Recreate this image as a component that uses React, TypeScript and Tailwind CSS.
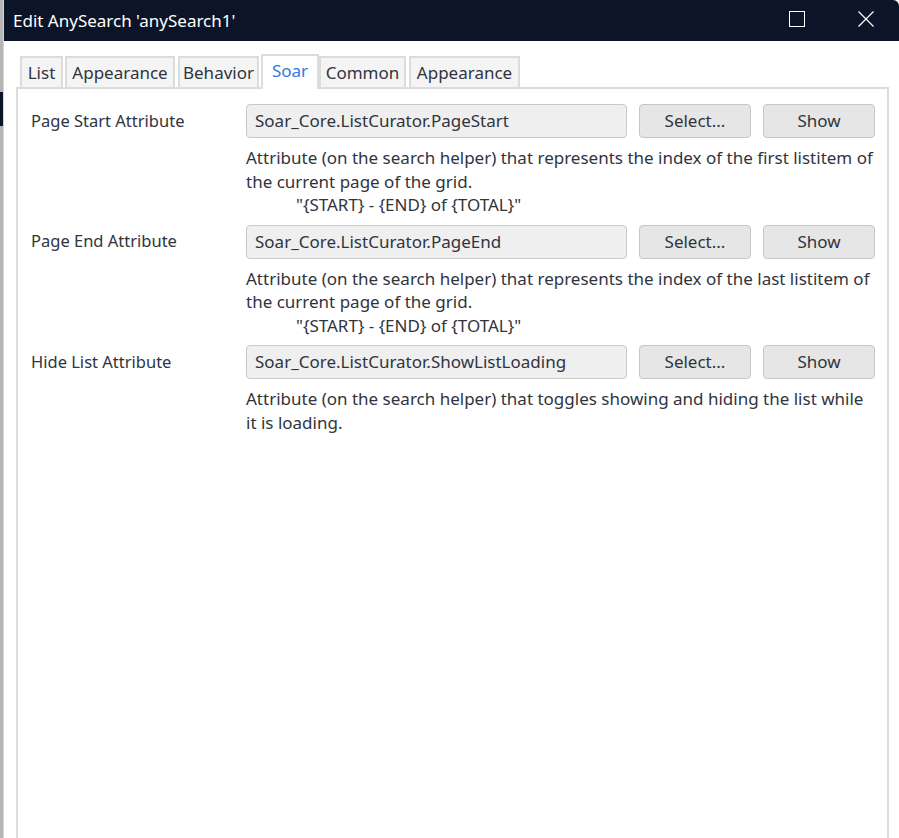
import React from "react";

const font = { fontFamily: '"Noto Sans", "Open Sans", sans-serif' };

function Row({
  label,
  value,
  lines,
}: {
  label: string;
  value: string;
  lines: React.ReactNode[];
}) {
  return (
    <div className="flex flex-col">
      <div className="flex items-center h-[34px]">
        <div className="w-[215px] text-[16.5px] text-[#30343d]">{label}</div>
        <div className="w-[381px] h-[34px] bg-[#efefef] border border-[#c9c9c9] rounded-[4px] flex items-center pl-[8px] text-[17px] text-[#30343d]">
          {value}
        </div>
        <button className="ml-[12px] w-[112px] h-[34px] bg-[#e6e6e6] border border-[#c6c6c6] rounded-[4px] text-[17px] text-[#30343d]">
          Select...
        </button>
        <button className="ml-[12px] w-[112px] h-[34px] bg-[#e6e6e6] border border-[#c6c6c6] rounded-[4px] text-[17px] text-[#30343d]">
          Show
        </button>
      </div>
      <div className="ml-[215px] mt-[8px] text-[17px] leading-[23.5px] text-[#30343d]">
        {lines.map((l, i) => (
          <div key={i}>{l}</div>
        ))}
      </div>
    </div>
  );
}

export default function App() {
  const tabs: { t: string; cls: string }[] = [
    { t: "List", cls: "w-[43px] ml-[0px]" },
    { t: "Appearance", cls: "w-[110px] ml-[2px]" },
    { t: "Behavior", cls: "w-[81px] ml-[3px]" },
    { t: "Soar", cls: "w-[58px] ml-[2px]" },
    { t: "Common", cls: "w-[87px] ml-[0px]" },
    { t: "Appearance", cls: "w-[111px] ml-[3px]" },
  ];
  return (
    <div className="w-[899px] h-[838px] overflow-hidden bg-white flex" style={font}>
      <div className="w-[3px] h-full bg-[#b5b5b5] flex flex-col">
        <div className="h-[92px]" />
        <div className="h-[34px] bg-[#0c1528]" />
      </div>
      <div className="w-[1px] h-full bg-[#d6d6d6]" />
      <div className="flex-1 flex flex-col">
        <div className="h-[41px] bg-[#0c1528] flex items-center text-white text-[17px] pl-[9px] rounded-tr-[6px]">
          <span>Edit AnySearch 'anySearch1'</span>
          <div className="ml-auto flex items-center -mt-[3px]">
            <svg width="16" height="16" viewBox="0 0 16 16" className="mr-[53px]">
              <rect x="0.5" y="0.5" width="15" height="15" fill="none" stroke="white" strokeWidth="1" />
            </svg>
            <svg width="16" height="16" viewBox="0 0 16 16" className="mr-[25px]">
              <path d="M0.5 0.5 L15.5 15.5 M15.5 0.5 L0.5 15.5" stroke="white" strokeWidth="1.2" />
            </svg>
          </div>
        </div>
        <div className="pl-[12px] pt-[13px] flex flex-col flex-1">
          <div className="flex items-end h-[33px] pl-[4px]">
            {tabs.map(({ t, cls }, i) =>
              t === "Soar" ? (
                <div
                  key={i}
                  className={`${cls} h-[35px] bg-white border-2 border-b-0 border-[#dcdcdc] flex justify-center items-center text-[17px] text-[#2d7be5] -mb-[2px] relative z-10 pb-[4px]`}
                >
                  {t}
                </div>
              ) : (
                <div
                  key={i}
                  className={`${cls} h-[31px] bg-[#f4f4f4] border-2 border-b-0 border-[#dcdcdc] flex justify-center items-center text-[17px] text-[#30343d]`}
                >
                  {t}
                </div>
              )
            )}
          </div>
          <div className="w-[873px] flex-1 border-2 border-b-0 border-[#dcdcdc] pl-[13px] pt-[15px] flex flex-col gap-[8px]">
            <Row
              label="Page Start Attribute"
              value="Soar_Core.ListCurator.PageStart"
              lines={[
                "Attribute (on the search helper) that represents the index of the first listitem of",
                "the current page of the grid.",
                <span className="pl-[50px]">"{"{START} - {END} of {TOTAL}"}"</span>,
              ]}
            />
            <Row
              label="Page End Attribute"
              value="Soar_Core.ListCurator.PageEnd"
              lines={[
                "Attribute (on the search helper) that represents the index of the last listitem of",
                "the current page of the grid.",
                <span className="pl-[50px]">"{"{START} - {END} of {TOTAL}"}"</span>,
              ]}
            />
            <Row
              label="Hide List Attribute"
              value="Soar_Core.ListCurator.ShowListLoading"
              lines={[
                "Attribute (on the search helper) that toggles showing and hiding the list while",
                "it is loading.",
              ]}
            />
          </div>
        </div>
      </div>
    </div>
  );
}
